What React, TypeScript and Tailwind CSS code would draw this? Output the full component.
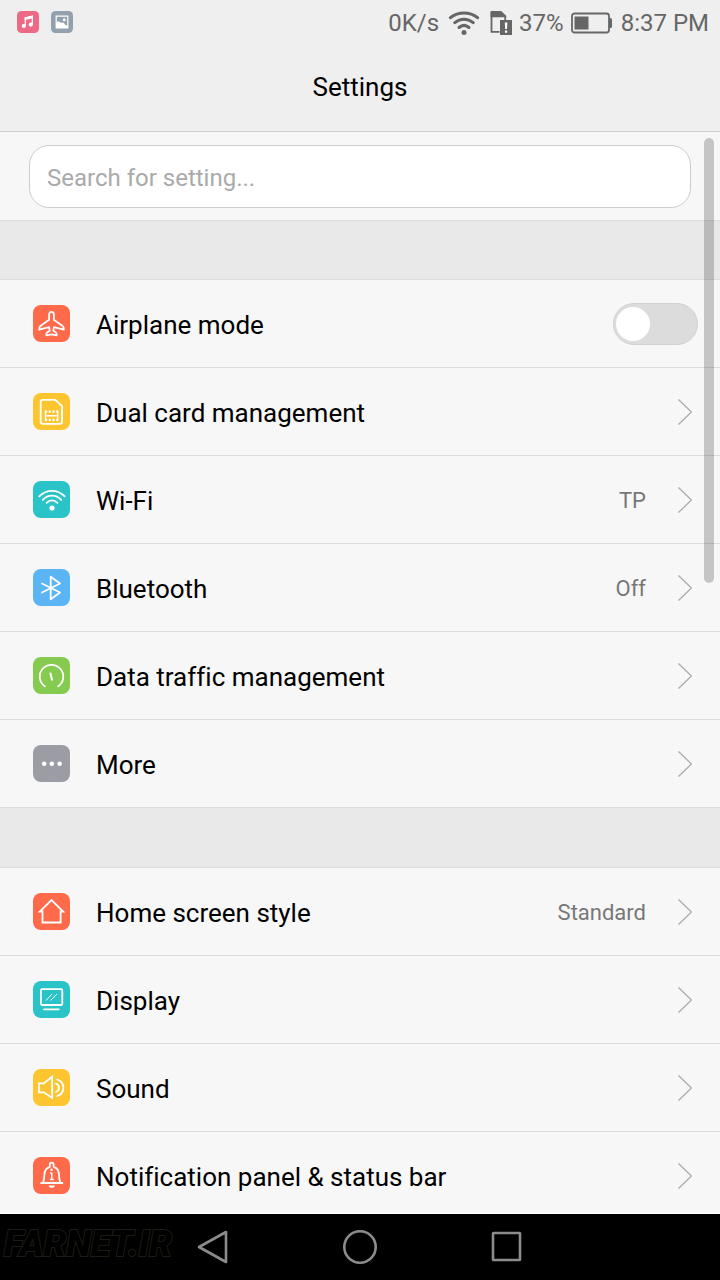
import { useState } from 'react';
import type { ReactNode } from 'react';

type Item = {
    title: string;
    bg: string;
    icon: ReactNode;
    value?: string;
};

const airplaneIcon = (
    <path d="M18.5 6.8c-1.6 0-2.4 1.4-2.4 3v5L7.4 21c-1 .8-1.3 1.7-1.2 3.6l9.9-2.4.6 3.6-2.6 1.8c-.8.6-.9 1.3-.8 2.7l5.2-.9 5.2.9c.1-1.4 0-2.1-.8-2.7l-2.6-1.800.6-3.600 9.900 2.400c.1-1.900-.2-2.800-1.200-3.600l-8.700-6.200v-5c0-1.600-.8-3-2.400-3z" />
);

const networkItems: Item[] = [
    {
        title: 'Dual card management',
        bg: 'bg-[#fdc52f]',
        icon: (
            <>
                <path d="M9.7 6.8h12.6l6.7 6.4v15.6a2 2 0 0 1-2 2H9.7a2 2 0 0 1-2-2v-20a2 2 0 0 1 2-2z" />
                <path d="M12.500 18.200v9.300M24.700 18.200v9.300M12.500 22.700h12.200" strokeWidth="1.400" />
                <path d="M12 18.600h13.500M12 26.900h13.500" strokeWidth="2.200" strokeDasharray="2.200 1.500" strokeLinecap="butt" />
            </>
        )
    },
    {
        title: 'Wi-Fi',
        bg: 'bg-[#29c3c8]',
        value: 'TP',
        icon: (
            <>
                <path d="M6.3 15.3c7.3-7.2 18.1-7.2 25.4 0M9.8 18.8c5.2-5.5 13.2-5.5 18.4 0M13.6 21.8c3.1-3.3 7.7-3.3 10.8 0" />
                <circle cx="19" cy="27" r="2.6" fill="#fff" stroke="none" />
            </>
        )
    },
    {
        title: 'Bluetooth',
        bg: 'bg-[#5bb5f5]',
        value: 'Off',
        icon: <path d="M9 14.5l18 9-9.3 6.8V7.7l9.3 6.8-18 9" />
    },
    {
        title: 'Data traffic management',
        bg: 'bg-[#85cb50]',
        icon: (
            <>
                <path d="M11.8 29.3a11.8 11.8 0 1 1 13.4 0" />
                <path d="M17.4 16.5l1.6 6.3" strokeWidth="2" />
            </>
        )
    },
    {
        title: 'More',
        bg: 'bg-[#9c9da4]',
        icon: (
            <g fill="#fff" stroke="none">
                <circle cx="11.2" cy="18.8" r="2.3" />
                <circle cx="18.8" cy="18.8" r="2.3" />
                <circle cx="26.6" cy="18.8" r="2.3" />
            </g>
        )
    }
];

const deviceItems: Item[] = [
    {
        title: 'Home screen style',
        bg: 'bg-[#ff6a4b]',
        value: 'Standard',
        icon: <path d="M9.5 18.5H6.8L18.5 7l11.7 11.5h-2.6v11H9.5z" strokeLinejoin="miter" />
    },
    {
        title: 'Display',
        bg: 'bg-[#29c3c8]',
        icon: (
            <>
                <rect x="7.9" y="8.2" width="21.4" height="15.8" rx="1.2" />
                <path d="M11 28.4h14.7" strokeWidth="1.8" />
                <path d="M13.2 19.2l5.8-6M17.9 19.2l5.8-6" strokeWidth="1" />
            </>
        )
    },
    {
        title: 'Sound',
        bg: 'bg-[#fdc52f]',
        icon: (
            <>
                <path d="M6 14.4h4.8l8.4-6.7v21.2l-8.4-5.6H6z" strokeLinejoin="miter" />
                <path d="M23 14.6c3.8 1.2 3.8 7.2 0 8.4M24.2 10.6c8.2 2.4 8.2 13.8 0 16.4" />
            </>
        )
    },
    {
        title: 'Notification panel & status bar',
        bg: 'bg-[#ff6a4b]',
        icon: (
            <>
                <path d="M8 26h21.4M10 25.8c1.1-2.4 1.3-4.8 1.4-8 .1-4.4 2.1-7 5.4-8V7.6a1.9 1.9 0 0 1 3.8 0v2.2c3.3 1 5.3 3.6 5.4 8 .1 3.2.3 5.6 1.4 8" />
                <path d="M17.6 16h1.2v6.3M17.4 22.5h2.8" strokeWidth="1.5" />
                <circle cx="18.6" cy="12.8" r="1.2" fill="#fff" stroke="none" />
                <path d="M15.6 28.6h6.2c-.3 1.6-1.5 2.5-3.1 2.5s-2.8-.9-3.1-2.5z" fill="#fff" stroke="none" />
            </>
        )
    }
];

function Tile({ bg, children }: { bg: string; children: ReactNode }) {
    return (
        <span className={`h-[37px] w-[37px] shrink-0 rounded-lg ${bg}`}>
            <svg viewBox="0 0 37 37" className="h-full w-full" fill="none" stroke="#fff" strokeWidth="1.8" strokeLinecap="round" strokeLinejoin="round" aria-hidden="true">
                {children}
            </svg>
        </span>
    );
}

function Row({ item }: { item: Item }) {
    return (
        <li className="border-b border-[#dcdcdc] last:border-b-0">
            <button type="button" className="flex h-[87px] w-full items-center pr-7 pl-[33px] text-left">
                <Tile bg={item.bg}>{item.icon}</Tile>
                <span className="ml-[26px] flex-1 pt-0.5 text-[26px] leading-8">{item.title}</span>
                {item.value && <span className="mr-8 pt-0.5 text-[22px] leading-8 text-[#777]">{item.value}</span>}
                <svg viewBox="0 0 14 26" className="h-[26px] w-[14px] shrink-0" fill="none" stroke="#a8a8a8" strokeWidth="1.2" aria-hidden="true">
                    <path d="M.5.5L13.4 13 .5 25.5" />
                </svg>
            </button>
        </li>
    );
}

function StatusBar() {
    return (
        <div className="flex h-[46px] items-center justify-between pr-[11px] pl-[17px] text-[24px] leading-7 text-[#666]">
            <div className="flex items-center gap-3 pb-0.5">
                <svg viewBox="0 0 22 22" className="h-[22px] w-[22px]" aria-label="Music">
                    <rect width="22" height="22" rx="4.5" fill="#ec6a86" />
                    <path d="M8.3 15V6.8l7-1.6v8.3" fill="none" stroke="#fff" strokeWidth="1.3" />
                    <path d="M7.7 6.4l8.300-1.800v2.600l-8.300 1.800z" fill="#fff" />
                    <circle cx="6.8" cy="15" r="2.1" fill="#fff" />
                    <circle cx="13.8" cy="13.6" r="2.1" fill="#fff" />
                </svg>
                <svg viewBox="0 0 22 22" className="h-[22px] w-[22px]" aria-label="Gallery">
                    <rect width="22" height="22" rx="4.5" fill="#93a1ae" />
                    <path d="M5.2 5.2h11.6v11.6H5.2z" fill="none" stroke="#fff" strokeWidth="1.2" />
                    <path d="M5 11.5c2-1.5 3.7-1.2 5 .5 2-1 3.500 0 4.500 2l2.500 1v2H5z" fill="#fff" />
                    <circle cx="13.3" cy="8.8" r="1.5" fill="#fff" />
                </svg>
            </div>
            <div className="flex items-center">
                <span>0K/s</span>
                <svg viewBox="0 0 32 25" className="ml-[9px] h-[25px] w-8" fill="none" stroke="#666" strokeWidth="3" strokeLinecap="round" aria-label="Wi-Fi">
                    <path d="M2.3 6.7c8.3-6.3 19.1-6.3 27.4 0M6.8 11.7c5.6-4.6 12.8-4.6 18.4 0M11 16.5c3.1-2.7 6.9-2.7 10 0" />
                    <circle cx="16" cy="21.5" r="2.5" fill="#666" stroke="none" />
                </svg>
                <svg viewBox="0 0 22 24" className="ml-2.5 h-6 w-[22px]" aria-label="SIM alert">
                    <path d="M1.5 1v19.8h8M15.200 5v4" fill="none" stroke="#666" strokeWidth="1.8" />
                    <path d="M.6 0h10.600l5 4.800v1.400H.6z" fill="#666" />
                    <path d="M10 9h12v15H10z" fill="#666" />
                    <path d="M14.800 11.500h2.600l-.4 6.500h-1.800zM15 19.500h2.200v2.300H15z" fill="#fff" />
                </svg>
                <span className="ml-[7px]">37%</span>
                <svg viewBox="0 0 42 22" className="ml-[7px] h-[22px] w-[42px]" aria-label="Battery">
                    <rect x="1" y="1.5" width="37" height="19" rx="2.5" fill="none" stroke="#666" strokeWidth="1.8" />
                    <rect x="3.5" y="4.5" width="14" height="13" fill="#666" />
                    <path d="M38 6h1.5A1.500 1.500 0 0 1 41 7.500v7a1.500 1.500 0 0 1-1.500 1.500H38z" fill="#666" />
                </svg>
                <span className="ml-2">8:37 PM</span>
            </div>
        </div>
    );
}

function NavBar() {
    const buttons = [
        { label: 'Back', shape: <path d="M3 17L30 2v30z" /> },
        { label: 'Home', shape: <circle cx="17" cy="17" r="15.7" /> },
        { label: 'Recent apps', shape: <rect x="3" y="3" width="27" height="27" rx=".5" /> }
    ];

    return (
        <nav className="relative flex h-[67px] shrink-0 items-center justify-center border-t border-white bg-black">
            <span className="absolute top-2.5 left-1 text-[36px] leading-10 font-black text-black italic [-webkit-text-stroke:2px_#1c1b14] [paint-order:stroke]">FARNET.IR</span>
            {buttons.map((button) => (
                <button key={button.label} type="button" aria-label={button.label} className="relative flex w-[147px] justify-center">
                    <svg viewBox="0 0 34 34" className="h-[34px] w-[34px]" fill="none" stroke="#8c8c8c" strokeWidth="2.6" strokeLinejoin="round">
                        {button.shape}
                    </svg>
                </button>
            ))}
        </nav>
    );
}

export default function App() {
    const [airplane, setAirplane] = useState(false);

    return (
        <div className="flex h-screen flex-col overflow-hidden bg-[#f7f7f7] font-[Roboto,sans-serif] text-black [font-variant-ligatures:none]">
            <header className="shrink-0 border-b border-[#cfcfcf] bg-[#efefef]">
                <StatusBar />
                <h1 className="pt-[25px] pb-7 text-center text-[26px] leading-8">Settings</h1>
            </header>

            <main className="relative min-h-0 flex-1 overflow-hidden">
                <div className="px-[29px] pt-[13px] pb-3">
                    <input
                        type="search"
                        aria-label="Search for setting"
                        placeholder="Search for setting..."
                        className="block h-[63px] w-full rounded-[20px] border border-[#cdcdcd] bg-white px-[17px] pt-0.5 text-[24px] placeholder:text-[#aaa]"
                    />
                </div>

                <div className="h-[60px] border-y border-[#dcdcdc] bg-[#e9e9e9]" />

                <ul>
                    <li className="border-b border-[#dcdcdc]">
                        <label className="flex h-[87px] items-center pr-[22px] pl-[33px]">
                            <Tile bg="bg-[#ff6a4b]">{airplaneIcon}</Tile>
                            <span className="ml-[26px] flex-1 pt-0.5 text-[26px] leading-8">Airplane mode</span>
                            <input
                                type="checkbox"
                                checked={airplane}
                                onChange={(e) => setAirplane(e.target.checked)}
                                className="flex h-[42px] w-[85px] appearance-none items-center rounded-full border border-[#d2d2d2] bg-[#dcdcdc] px-0.5 before:h-[34px] before:w-[34px] before:rounded-full before:bg-white checked:justify-end checked:bg-[#29c3c8]"
                            />
                        </label>
                    </li>
                    {networkItems.map((item) => (
                        <Row key={item.title} item={item} />
                    ))}
                </ul>

                <div className="h-[61px] border-y border-[#dcdcdc] bg-[#e9e9e9]" />

                <ul>
                    {deviceItems.map((item) => (
                        <Row key={item.title} item={item} />
                    ))}
                </ul>

                {/* Scroll indicator */}
                <div className="absolute top-1.5 right-1.5 h-[445px] w-2.5 rounded-full bg-black/20" />
            </main>

            <NavBar />
        </div>
    );
}
